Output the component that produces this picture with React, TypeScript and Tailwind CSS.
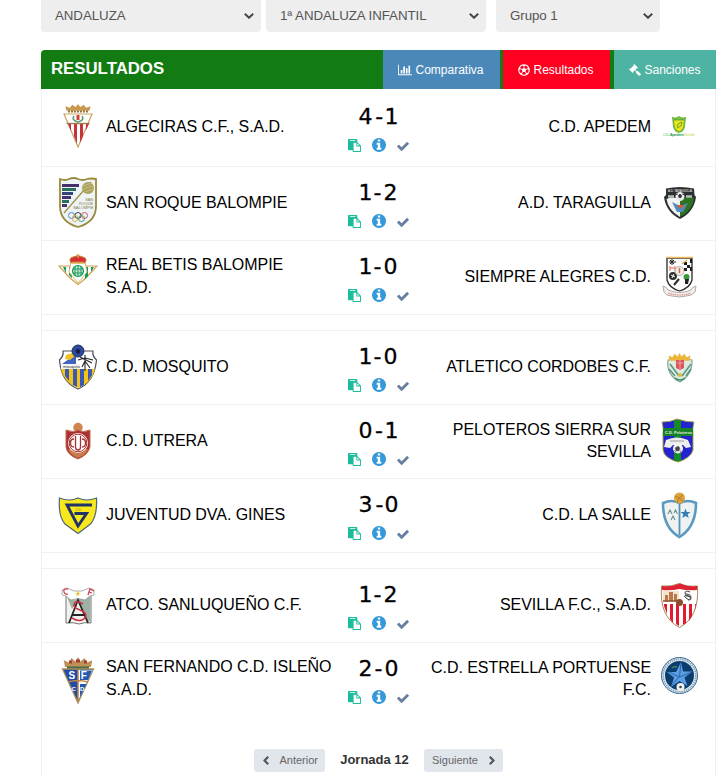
import type { ReactNode } from "react";
import clsx from "clsx";
import { FaRegFutbol } from "react-icons/fa";

type Team = {
  name: string;
  crest: ReactNode;
};

type Match = {
  home: Team;
  away: Team;
  score: [number, number];
};

const crown = "M0 9 L-1 3 L3 5 L5 1 L8 4 L10 0 L12 4 L15 1 L17 5 L21 3 L20 9 Z";

/* Escudos */
const Algeciras = () => (
  <>
    <path d="M6 14h28L20 47z" fill="#fff" stroke="#c9a564" strokeWidth="1.2" />
    <path d="M10 24h3v7zM16 24h3v20l-3-8zM22 24h3v12l-3 7zM28 24h3l-3 6z" fill="#c8323c" />
    <path d="M8.500 23.500h23" stroke="#a07b4a" strokeWidth="1.4" />
    <path d={crown} transform="translate(8.500 4) scale(1.150 .750)" fill="#c79a50" />
    <path d="M10 11.500h21" stroke="#9c7439" strokeWidth="2" strokeDasharray="2 1" />
    <path d="M16 16q-3 4 4 6q7-2 4-6" fill="none" stroke="#5d9a72" strokeWidth="1.5" />
    <path d="M18.500 15h3v5h-3z" fill="#d14338" />
  </>
);

const SanRoque = () => (
  <>
    <path d="M2 3q5 2 9 0q5-2 9 0q5 2 9 0q4-1 9 0v27q0 16-18 21Q2 46 2 30z" fill="#eef3f7" stroke="#9a8a3c" strokeWidth="1.8" />
    <path d="M4 8h17v3H4zM4 20h9v3H4zM4 28h5v3H4z" fill="#45316f" />
    <path d="M4 12h14v3H4zM4 24h7v3H4z" fill="#28705c" />
    <path d="M4 16h11v3H4z" fill="#34437a" />
    <path d="M6 37L33 6" stroke="#a0924b" strokeWidth="1.3" />
    <circle cx="30" cy="12" r="6" fill="#aca25d" />
    <path d="M25 10l9-3M25 13l10-3M27 16l8-3" stroke="#d3cc98" strokeWidth=".6" />
    <g fill="#857a38" fontSize="3.800" textAnchor="end" fontFamily="Liberation Sans, sans-serif">
      <text x="35" y="24.500">SAN</text>
      <text x="35" y="28.800">ROQUE</text>
      <text x="35.500" y="33" textLength="20">BALOMPIE</text>
    </g>
    <g fill="none" strokeWidth=".9">
      <circle cx="13.500" cy="39.500" r="3" stroke="#4b7bc0" />
      <circle cx="20" cy="39.500" r="3" stroke="#333" />
      <circle cx="26.500" cy="39.500" r="3" stroke="#d04545" />
      <circle cx="17" cy="42.500" r="3" stroke="#d9ad3c" />
      <circle cx="23.500" cy="42.500" r="3" stroke="#3c9c62" />
    </g>
  </>
);

const Betis = () => (
  <>
    <path d="M1 16h38L28 28l-8 6.500l-8-6.500z" fill="#fff" stroke="#c9a24b" strokeWidth="1.2" />
    <path d="M5 17h3v6zM11 17h3v11l-3-3zM27 17h3v9l-3 3zM33 17h3l-3 5z" fill="#159a5b" />
    <path d="M13 12h14l2 10-9 11-9-11z" fill="#fff" stroke="#d4aa4e" strokeWidth=".8" />
    <circle cx="20" cy="21" r="5.500" fill="#bfe3cf" stroke="#159a5b" strokeWidth="1.2" />
    <path d="M17 16v10M20 15v12M23 16v10M15 19h10M15 23h10" stroke="#159a5b" strokeWidth=".9" />
    <path d="M13 13q-3-5 2-6q5-3 10 0q5 1 2 6z" fill="#d32f39" stroke="#c9963a" strokeWidth="1" />
    <path d="M14 12.500h12M20 4v4" stroke="#d8a53b" strokeWidth="1.5" />
  </>
);

const Mosquito = () => (
  <>
    <path d="M5 11h30q-1 5 3.500 9q-2 22-18.500 29Q3 42 1.500 20q4.500-4 3.500-9z" fill="#fff" stroke="#4a4e59" strokeWidth="1.200" />
    <path d="M3 29h34q-3 14-17 19Q6 43 3 29z" fill="#f3c316" />
    <path d="M7 29h4v12l-4-5zM15 29h4v18l-4-2zM22 29h4v16l-4 2zM30 29h4v6l-4 6z" fill="#3b58b2" />
    <path d="M4 24L18 14v10z" fill="#3e62bd" />
    <path d="M8 15l6-2 3 3-5 4-5-1z" fill="#f0c02a" />
    <path d="M3 24h19v5H3z" fill="#f3f3f3" />
    <text x="5" y="27.800" fontSize="4.200" fill="#333" fontFamily="Liberation Sans, sans-serif">mosquito</text>
    <path d="M20 20l7-2 8 2M27 15v16M24 27l3-6 5 7M22 17l12 6" fill="none" stroke="#242424" strokeWidth="1.100" />
    <circle cx="20" cy="11" r="6" fill="#2b4aa0" stroke="#24304f" />
    <path d="M20 8.500l2.500 2-1 3h-3l-1-3z" fill="#17213f" />
  </>
);

const Utrera = () => (
  <>
    <circle cx="20" cy="13.500" r="4.700" fill="#cf8452" />
    <path d="M8 16q7 3 12 0q5 3 12 0v17q-2 8-12 12Q9 41 8 33z" fill="#a83232" stroke="#c46b4d" strokeWidth="1" />
    <path d="M10 35q2 6 10 9q8-3 10-9z" fill="#c97b4c" />
    <circle cx="20" cy="29" r="10" fill="#fff" />
    <circle cx="20" cy="29" r="8.800" fill="none" stroke="#a83232" strokeWidth="1" />
    <path d="M16 25q-3.500 0-3.500 4t3.500 4M24 25q3.500 0 3.500 4t-3.500 4M17.500 22v11q0 3 2.500 3t2.500-3v-11" fill="none" stroke="#a83232" strokeWidth="1.300" />
  </>
);

const Gines = () => (
  <>
    <path d="M1.500 10q10 4 18.500 0q8.500 4 18.500 0q1 18-6 26l-12.500 9.500L7 36Q0 28 1.500 10z" fill="#f8e71c" stroke="#4b6777" strokeWidth="1.200" />
    <path d="M34 17H9l11 21 8.500-12.500H16.500" fill="none" stroke="#1e3565" strokeWidth="2.900" />
    <text x="17" y="22.500" fontSize="4" fill="#8f8a2b" fontFamily="Liberation Sans, sans-serif">J-D</text>
  </>
);

const Sanluqueno = () => (
  <>
    <path d="M8 17h25v28q-7-1-12 1q-5-2-13-1z" fill="#f1f2f0" stroke="#777" strokeWidth="1" />
    <path d="M9 19q5 4 11 2q7 0 12-4v26l-3 1L20 23l-6 8z" fill="#9db1a4" />
    <path d="M4 12l5-2 7 3h8l7-3 5 2v5l-4 1-5 4q-7-3-14 0l-5-4-4-1z" fill="#fff" stroke="#999" strokeWidth=".8" />
    <path d="M11 45L20 22l10 23M14 37h13" fill="none" stroke="#242424" strokeWidth="1.800" />
    <path d="M25 26q-8-5-9 1q0 3 6 5q8 3 5 8q-5 5-13 0" fill="none" stroke="#d03242" strokeWidth="1.600" />
    <path d="M10 11q-5-1-4 3q1 3 4 2M30 17l2-6 4 2M31 14l3 1" fill="none" stroke="#ce3f50" strokeWidth="1.300" />
    <path d="M20 13l1 2h2l-2 1v2l-1-1-2 1 1-2-2-1h2z" fill="#e6c52f" />
  </>
);

const SanFernando = () => (
  <>
    <path d="M4.500 17h31L20 51z" fill="#1e4ca8" stroke="#a98d54" strokeWidth="1.300" />
    <path d="M20 18h14.500L20 49z" fill="#fff" />
    <path d="M22 18.500h12l-4 9.500h-8zM22 32h6.500l-6.500 13z" fill="#2458b4" />
    <path d="M20 13v37M10 30q10-3 20 0" fill="none" stroke="#c48540" strokeWidth="1.500" />
    <path d={crown} transform="translate(7 5) scale(1.300 1.100)" fill="#bc9258" />
    <path d="M9 14.500h22v2H9z" fill="#4c6b42" />
    <path d="M11 10h3M18 9h4M26 10h3" stroke="#a83a38" strokeWidth="3" />
    <g fill="#fff" fontWeight="700" fontFamily="Liberation Sans, sans-serif">
      <text x="10.500" y="27" fontSize="10">S</text>
      <text x="22.800" y="27" fontSize="10">F</text>
      <text x="13.500" y="39" fontSize="6">C</text>
      <text x="22" y="39" fontSize="6">D</text>
    </g>
  </>
);

const Apedem = () => (
  <>
    <path d="M13 18q3 1 6-1q3 2 6 1l-1 9q-1 4-5 5-4-1-5-5z" fill="#f6e414" stroke="#70ba3c" strokeWidth="1.800" />
    <path d="M17 27l1-3 4-2-1 4-4 2" fill="none" stroke="#5aa83b" strokeWidth="1" />
    <path d="M13 19.500h12" stroke="#63b142" strokeWidth="2" />
    <text x="3" y="36" fontSize="4" fill="#53b46b" fontFamily="Liberation Sans, sans-serif" textLength="32">
      C.D.<tspan fontWeight="700" fill="#2fa359">Apedem</tspan><tspan fill="#d5dd59">Montilla</tspan>
    </text>
  </>
);

const Taraguilla = () => (
  <>
    <path d="M6 12.500q14-3 28 0l.500 6.500 1.500 2q-2 15-16 22Q6 36 4 21l2-2z" fill="#2c3030" />
    <path d="M6.500 23q5-3 13.500 0v18Q8 34 6.500 23z" fill="#f3f3f3" />
    <path d="M20 23q8-3 14-1-1 12-14 19z" fill="#2d721f" />
    <circle cx="20" cy="20.500" r="4.500" fill="#e9e9e9" />
    <path d="M20 18l1.500 1.500-.5 2h-2l-.5-2zM15 19l3-1M22 18l3 1" fill="#303030" stroke="#303030" strokeWidth=".8" />
    <path d="M12 26l8 4 8-3-5 9h-6z" fill="#4e8cc4" />
    <path d="M16 29h9l-4 4z" fill="#c7623b" />
    <path d="M8 20.500h6M26 20.500h6" stroke="#b7bdbc" strokeWidth="2.500" />
    <text x="8" y="15.500" fontSize="4" fill="#fff" fontFamily="Liberation Sans, sans-serif" textLength="24" lengthAdjust="spacingAndGlyphs">A.D. TARAGUILLA</text>
  </>
);

const SiempreAlegres = () => (
  <>
    <path d="M7 8h25v22q-2 8-12.500 11Q9 38 7 30z" fill="#fdfdfd" stroke="#292929" strokeWidth="1.300" />
    <path d="M6 7.500h27" stroke="#e9b95a" strokeWidth="1.500" />
    <path d="M9 12h7M12 9v6M10 10l4 4M14 10l-4 4" stroke="#222" strokeWidth="1" />
    <path d="M10 18h5M10 16v5M15 16v5" stroke="#df6a4a" strokeWidth="1" />
    <path d="M24 12h3v3h3v3h-3v3h-3v-3h3v-3h-3zM30 9h2v4h-2zM30 17h2v4h-2z" fill="#1c1c1c" />
    <path d="M22 14l5-4" stroke="#eda144" strokeWidth="1.300" />
    <circle cx="13" cy="26" r="4" fill="#303030" />
    <path d="M11 25l4 2M12 28l2-4" stroke="#fff" />
    <circle cx="19.500" cy="21" r="4.500" fill="#f8eee4" stroke="#999" strokeWidth=".8" />
    <path d="M19.500 18v5" stroke="#cc674c" strokeWidth="1.500" />
    <path d="M14 35l5-6" stroke="#2a2a2a" strokeWidth="2" />
    <circle cx="26.500" cy="27" r="3" fill="#399a3b" />
    <path d="M25 29h4l-1 5h-3z" fill="#222" />
    <path d="M3 36q4 1 5 4q12 5 23 0q1-3 5-4l-1 6q-3 4-9 4-6 2-14 0-6 0-8-4z" fill="#f4f0ed" stroke="#a89f9c" strokeWidth=".9" />
    <path d="M8 43q12 4 23 0" fill="none" stroke="#d98b79" strokeWidth="1.200" strokeDasharray="1.500 .800" />
  </>
);

const Cordobes = () => (
  <>
    <path d="M8 20q12-3 24 0q1 14-12 22Q6 35 8 20z" fill="#dfeae3" stroke="#8da69a" strokeWidth="1.200" />
    <path d="M9 29l6 7M10 24l9 12M31 24l-9 12M31 29l-5 7" stroke="#55977a" strokeWidth="1.500" />
    <path d={crown} transform="translate(9.500 13) scale(1 .850)" fill="#eeb539" />
    <path d="M16 20h8v8l-4 2-4-2z" fill="#d9575c" />
    <path d="M17 23h6M20 20v9" stroke="#f0aaa8" strokeWidth=".9" />
    <circle cx="20" cy="35" r="2" fill="#dfc03a" />
    <path d="M15 38q5 4 10 0" fill="none" stroke="#339061" strokeWidth="1.500" />
  </>
);

const Peloteros = () => (
  <>
    <path d="M2 8q9 0 15-3q9 3 17 3-2 7-1 13v15q-2 8-15 12Q4 44 3 36V21Q4 15 2 8z" fill="#2424cf" stroke="#a8a545" strokeWidth="1" />
    <path d="M14 6h7v41h-7z" fill="#158a29" />
    <path d="M3 14h30v8H3z" fill="#17812a" />
    <text x="5" y="20" fontSize="4" fontWeight="700" fill="#e0efdf" fontFamily="Liberation Sans, sans-serif">C.D. Peloteros</text>
    <path d="M6 26q11-5 22 0l3 7-5 1-3-3h-10l-3 3-6-1z" fill="#eee" />
    <circle cx="18" cy="34.500" r="5" fill="#f6f6f6" />
    <path d="M18 32l2 2-1 3h-3l-1-3zM14 36l2 2M21 36l-1 3" fill="#444" stroke="#777" strokeWidth=".7" />
    <path d="M10 27h14" stroke="#888" strokeWidth=".8" />
  </>
);

const LaSalle = () => (
  <>
    <path d="M3 15q9-4 16.500 0Q28 11 36 15q0 24-16.500 34Q3 40 3 15z" fill="#eef3f1" stroke="#5a9ac0" strokeWidth="2.600" />
    <path d="M19.500 16v31" stroke="#4e93bf" strokeWidth="1.800" />
    <circle cx="19.500" cy="10" r="5.500" fill="#dda13d" />
    <path d="M15 8l4 2 4-3M19 10l-2 5M19 10l4 3" fill="none" stroke="#a86d25" strokeWidth=".7" />
    <path d="M8 26l2-4 2 4M14 25l1.500-3 2 4M11 32l2-4 2 4" fill="none" stroke="#6f918c" strokeWidth="1.100" />
    <path d="M25.500 20.500l1.300 3.500h3.700l-2.800 2.300 1 3.700-3.200-2-3.200 2 1-3.700-2.800-2.300h3.700z" fill="#347db5" />
  </>
);

const Sevilla = () => (
  <>
    <path d="M1.500 8q10 1 18-2.500Q27 9 37.500 8q2 31-18 41.500Q-1 39 1.500 8z" fill="#fff" stroke="#a98655" strokeWidth="1" />
    <path d="M2 8q10 1 18-2.500Q27 9 37 8v4q-9 1-17.500-1Q11 13 2 12z" fill="#dd2333" />
    <path d="M2.500 13H19v11H3z" fill="#f3e4cd" />
    <path d="M5 17h3v6H5zM9 14h4v9H9zM14 16h3v7h-3z" fill="#bc7948" />
    <path d="M3 23h14" stroke="#8c5233" strokeWidth="1.500" />
    <path d="M30 14q-5-2-5 1t4 3q3 3-1 4M26 16q5 0 5 4t-5 0 5-1" fill="none" stroke="#444" strokeWidth="1" />
    <path d="M4 26h3v10l-3-8zM10 26h3v19l-3-4zM16 26h3v22l-3-2zM23 26h3v19l-3 2zM29 26h3v12l-3 5zM35 26h1l-1 6z" fill="#e3192f" />
    <circle cx="19.500" cy="24.500" r="3.500" fill="#8a4e2d" />
  </>
);

const Estrella = () => (
  <>
    <circle cx="19.500" cy="23.500" r="18" fill="#dce8ef" stroke="#3c6b91" strokeWidth="1" />
    <circle cx="19.500" cy="23.500" r="16.300" fill="none" stroke="#7f9fb8" strokeWidth="1.600" strokeDasharray="1.300 .900" />
    <circle cx="19.500" cy="23.500" r="14.500" fill="#0c3d6f" />
    <path d="M21 10l2 9.500 9.500 0-8 6 3 8.500-8-5-8.500 6 3-9.500-7-5.500 9 0z" fill="#5b9ee5" />
    <path d="M21 10l-1.500 15M32 20L19.500 25M11 34l8-9M8 19.500l11 5.500" stroke="#1f5590" strokeWidth=".8" />
    <path d="M12 16q2-2 5-1" fill="none" stroke="#408b62" strokeWidth="1.500" />
    <circle cx="20.500" cy="35" r="4" fill="#f4f2e9" />
    <circle cx="20.500" cy="35" r="1.300" fill="#35465a" />
  </>
);

const JORNADA: Match[][] = [
  [
    {
      home: { name: "ALGECIRAS C.F., S.A.D.", crest: <Algeciras /> },
      away: { name: "C.D. APEDEM", crest: <Apedem /> },
      score: [4, 1],
    },
    {
      home: { name: "SAN ROQUE BALOMPIE", crest: <SanRoque /> },
      away: { name: "A.D. TARAGUILLA", crest: <Taraguilla /> },
      score: [1, 2],
    },
    {
      home: { name: "REAL BETIS BALOMPIE\nS.A.D.", crest: <Betis /> },
      away: { name: "SIEMPRE ALEGRES C.D.", crest: <SiempreAlegres /> },
      score: [1, 0],
    },
  ],
  [
    {
      home: { name: "C.D. MOSQUITO", crest: <Mosquito /> },
      away: { name: "ATLETICO CORDOBES C.F.", crest: <Cordobes /> },
      score: [1, 0],
    },
    {
      home: { name: "C.D. UTRERA", crest: <Utrera /> },
      away: { name: "PELOTEROS SIERRA SUR\nSEVILLA", crest: <Peloteros /> },
      score: [0, 1],
    },
    {
      home: { name: "JUVENTUD DVA. GINES", crest: <Gines /> },
      away: { name: "C.D. LA SALLE", crest: <LaSalle /> },
      score: [3, 0],
    },
  ],
  [
    {
      home: { name: "ATCO. SANLUQUEÑO C.F.", crest: <Sanluqueno /> },
      away: { name: "SEVILLA F.C., S.A.D.", crest: <Sevilla /> },
      score: [1, 2],
    },
    {
      home: { name: "SAN FERNANDO C.D. ISLEÑO\nS.A.D.", crest: <SanFernando /> },
      away: { name: "C.D. ESTRELLA PORTUENSE\nF.C.", crest: <Estrella /> },
      score: [2, 0],
    },
  ],
];

// ancho del gol local segun la cifra
const digitWidth: Record<number, string> = {
  0: "w-[17px]",
  1: "w-[15px]",
  2: "w-4",
  3: "w-[19px]",
  4: "w-[18px]",
};

const PasteIcon = () => (
  <svg className="size-[13px]" viewBox="0 0 1792 1792" fill="#1abc9c">
    <path d="M768 1664h896v-640h-416q-40 0-68-28t-28-68v-416h-384v1152zM1024 224v-64q0-13-9.500-22.500t-22.500-9.500h-704q-13 0-22.500 9.500t-9.500 22.500v64q0 13 9.500 22.500t22.500 9.500h704q13 0 22.500-9.500t9.500-22.500zM1280 896h299l-299-299v299zM1792 1024v672q0 40-28 68t-68 28h-960q-40 0-68-28t-28-68v-160h-544q-40 0-68-28t-28-68v-1344q0-40 28-68t68-28h1088q40 0 68 28t28 68v328q21 13 36 28l408 408q28 28 48 76t20 88z" />
  </svg>
);

const InfoIcon = () => (
  <svg className="-mt-px size-3.5" viewBox="128 128 1536 1536" fill="#3498db">
    <path d="M1152 1376v-160q0-14-9-23t-23-9h-96v-512q0-14-9-23t-23-9h-320q-14 0-23 9t-9 23v160q0 14 9 23t23 9h96v320h-96q-14 0-23 9t-9 23v160q0 14 9 23t23 9h448q14 0 23-9t9-23zM1024 480v-160q0-14-9-23t-23-9h-192q-14 0-23 9t-9 23v160q0 14 9 23t23 9h192q14 0 23-9t9-23zM1664 896q0 209-103 385.500t-279.500 279.500-385.500 103-385.500-103-279.500-279.500-103-385.500 103-385.500 279.500-279.500 385.500-103 385.500 103 279.500 279.500 103 385.500z" />
  </svg>
);

const CheckIcon = () => (
  <svg className="mt-px h-[9px] w-3" viewBox="121 334 1550 1188" fill="#67809f">
    <path d="M1671 566q0 40-28 68l-724 724-136 136q-28 28-68 28t-68-28l-136-136-362-362q-28-28-28-68t28-68l136-136q28-28 68-28t68 28l294 295 656-657q28-28 68-28t68 28l136 136q28 28 28 68z" />
  </svg>
);

const ChartIcon = () => (
  <svg className="h-3 w-3.5" viewBox="0 0 2048 1792" fill="currentColor">
    <path d="M640 896v512h-256v-512h256zm384-512v1024h-256v-1024h256zm1024 1152v128h-2048v-1536h128v1408h1920zm-640-896v768h-256v-768h256zm384-384v1152h-256v-1152h256z" />
  </svg>
);

const GavelIcon = () => (
  <svg className="size-3" viewBox="0 0 1792 1792" fill="currentColor">
    <path d="M1771 1536q0 53-37 90l-107 108q-39 37-91 37-53 0-90-37l-363-364q-38-36-38-90 0-53 43-96l-256-256-126 126q-14 14-34 14t-34-14q2 2 12.500 12t12.500 13 10 11.500 10 13.500 6 13.500 5.500 16.500 1.500 18q0 38-28 68-3 3-16.500 18t-19 20.500-18.500 16.500-22 15.500-22 9-26 4.500q-40 0-68-28l-408-408q-28-28-28-68 0-13 4.500-26t9-22 15.500-22 16.500-18.500 20.500-19 18-16.500q30-28 68-28 10 0 18 1.500t16.500 5.500 13.500 6 13.500 10 11.500 10 13 12.500 12 12.500q-14-14-14-34t14-34l348-348q14-14 34-14t34 14q-2-2-12.500-12t-12.500-13-10-11.500-10-13.500-6-13.500-5.500-16.500-1.500-18q0-38 28-68 3-3 16.500-18t19-20.500 18.500-16.500 22-15.500 22-9 26-4.500q40 0 68 28l408 408q28 28 28 68 0 13-4.500 26t-9 22-15.500 22-16.500 18.500-20.500 19-18 16.500q-30 28-68 28-10 0-18-1.500t-16.500-5.500-13.500-6-13.500-10-11.500-10-13-12.500-12-12.500q14 14 14 34t-14 34l-126 126 256 256q43-43 96-43 52 0 91 37l363 363q37 39 37 91z" />
  </svg>
);

const Select = ({ label, className }: { label: string; className: string }) => (
  <button
    className={clsx(
      "flex h-8 items-center justify-between rounded-b bg-[#eee] pr-[7px] pl-3.5 text-[13.33px] tracking-[-0.07px] text-[#555]",
      className
    )}
  >
    {label}
    <svg className="h-1.5 w-2.5" viewBox="0 0 10 6" fill="none" stroke="#444" strokeWidth="1.9">
      <path d="M.8.8L5 4.800 9.200.8" />
    </svg>
  </button>
);

const Crest = ({ children }: { children: ReactNode }) => (
  <svg className="h-[52px] w-10 shrink-0" viewBox="0 0 40 52">
    {children}
  </svg>
);

const MatchRow = ({ match, first }: { match: Match; first: boolean }) => (
  <div
    className={clsx(
      "flex items-center border-b border-[#eff1f4] pr-[15px] pb-[3px] pl-4",
      first ? "h-[78px]" : "h-[74px]"
    )}
  >
    <Crest>{match.home.crest}</Crest>
    <div className="w-[235px] pl-2 text-base leading-[23px] tracking-[-0.05px] whitespace-pre">{match.home.name}</div>
    <div className="flex w-[91px] shrink-0 flex-col items-center pt-[3px]">
      <div className="flex h-[35px] w-10 items-center pb-px font-['DejaVu_Sans',sans-serif] text-[22px] leading-none [-webkit-text-stroke:0.3px_black]">
        <span className={digitWidth[match.score[0]]}>{match.score[0]}</span>
        <span className="w-2.5">-</span>
        <span>{match.score[1]}</span>
      </div>
      <div className="flex h-5 items-center gap-[11px] pt-px">
        <PasteIcon />
        <InfoIcon />
        <CheckIcon />
      </div>
    </div>
    <div className="flex-1 pt-0.5 pr-[9px] text-right text-base leading-[22.5px] tracking-[-0.05px] whitespace-pre">{match.away.name}</div>
    <Crest>{match.away.crest}</Crest>
  </div>
);

export default function App() {
  return (
    <div className="h-[776px] w-[724px] overflow-hidden bg-white font-['Liberation_Sans',Arial,sans-serif] text-black">
      {/* Filtros */}
      <div className="flex pl-[41px]">
        <Select label="ANDALUZA" className="w-[220px]" />
        <Select label="1ª ANDALUZA INFANTIL" className="ml-[5px] w-[220px]" />
        <Select label="Grupo 1" className="ml-2.5 w-[164px]" />
      </div>

      <div className="mt-[18px] ml-[41px] w-[675px]">
        <div className="flex h-[39px] items-stretch overflow-hidden rounded-tl bg-[#127c12] text-xs text-white">
          <h1 className="flex-1 pt-2 pl-2.5 text-[16.8px] leading-[22px] font-bold">RESULTADOS</h1>
          <button className="flex w-[117px] items-center justify-center gap-[3px] bg-[#4b88ba] pr-px">
            <ChartIcon />
            Comparativa
          </button>
          <button className="ml-[3px] flex w-[107px] items-center justify-center gap-[3px] bg-[#ff0020] pr-px">
            <FaRegFutbol className="size-3" />
            Resultados
          </button>
          <button className="ml-1 flex w-[102px] items-center justify-center gap-[3px] bg-[#4fb3a3]">
            <GavelIcon />
            Sanciones
          </button>
        </div>

        {/* Partidos */}
        <div className="h-[687px] border-x border-[#eff1f4]">
          {JORNADA.map((group, i) => (
            <div key={i} className={clsx(i > 0 && "mt-[15px] border-t border-[#eff1f4]", i === 2 && "[&>div:last-child]:border-transparent")}>
              {group.map((match, j) => (
                <MatchRow key={match.home.name} match={match} first={i === 0 && j === 0} />
              ))}
            </div>
          ))}

          {/* Paginación */}
          <div className="mt-8 flex h-[23px] items-center pl-[212px] text-[11px] text-[#666]">
            <button className="flex h-full w-[71px] items-center justify-between rounded-[3px] bg-[#e1e5ec] pr-[7px] pl-[9px]">
              <svg className="h-[9px] w-1.5" viewBox="0 0 6 9" fill="none" stroke="#555" strokeWidth="2.200">
                <path d="M5.200.8L1.500 4.500l3.700 3.700" />
              </svg>
              Anterior
            </button>
            <span className="w-[99px] pb-0.5 text-center text-[13px] font-bold text-[#333]">Jornada 12</span>
            <button className="flex h-full w-[79px] items-center justify-between rounded-[3px] bg-[#e1e5ec] px-2">
              Siguiente
              <svg className="h-[9px] w-1.5" viewBox="0 0 6 9" fill="none" stroke="#555" strokeWidth="2.200">
                <path d="M.8.8l3.700 3.700L.8 8.200" />
              </svg>
            </button>
          </div>
        </div>
      </div>
    </div>
  );
}
